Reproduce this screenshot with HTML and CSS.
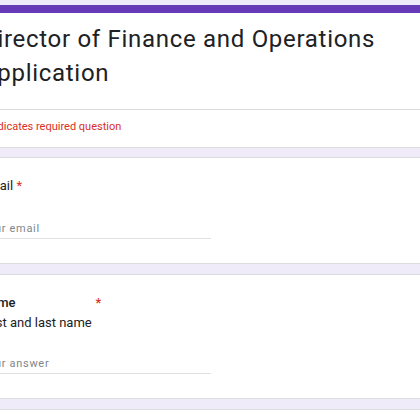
FILE: index.html
```html
<!DOCTYPE html>
<html lang="en">
<head>
  <meta charset="UTF-8">
  <meta name="viewport" content="width=device-width, initial-scale=1.0">
  <title>Director of Finance and Operations Application</title>
  <link rel="stylesheet" href="styles.css">
</head>
<body>
  <div class="form">
    <div class="card header-card">
      <h1 class="form-title">Director of Finance and Operations Application</h1>
      <div class="required-note">* Indicates required question</div>
    </div>

    <div class="card question">
      <div class="q-title">Email <span class="req">*</span></div>
      <div class="answer">Your email</div>
    </div>

    <div class="card question">
      <div class="q-title bold">Name<span class="req req-far">*</span></div>
      <div class="q-desc">First and last name</div>
      <div class="answer">Your answer</div>
    </div>

    <div class="card question"></div>
  </div>
</body>
</html>
```

FILE: styles.css
```css
body {
  margin: 0;
  background-color: #f0ebf8;
  font-family: Roboto, Arial, sans-serif;
  color: #202124;
  overflow: hidden;
}
.form {
  margin-left: -44px;
  width: 500px;
  padding-top: 5px;
}
.card {
  background-color: #fff;
  border: 1px solid #dadce0;
  border-radius: 8px;
  margin-bottom: 10px;
  padding: 0 24px;
}
.header-card {
  border-top: 8px solid #673ab7;
  padding-top: 9px;
  padding-bottom: 12px;
  margin-bottom: 9px;
}
.form-title {
  margin: 0 -24px;
  padding: 0 24px 19px;
  font-weight: 400;
  font-size: 24px;
  line-height: 34px;
  letter-spacing: 0.7px;
  border-bottom: 1px solid #dadce0;
}
.required-note {
  color: #d93025;
  font-size: 11px;
  line-height: 16px;
  padding-top: 9px;
}
.question {
  padding-top: 18px;
  padding-bottom: 24px;
}
.q-title {
  font-size: 13px;
  line-height: 20px;
}
.q-title.bold {
  font-weight: 500;
}
.req {
  color: #d93025;
}
.req-far {
  padding-left: 80px;
}
.q-desc {
  font-size: 13px;
  line-height: 20px;
}
.answer {
  width: 230px;
  margin-top: 25px;
  font-size: 11px;
  letter-spacing: 0.7px;
  line-height: 16px;
  color: #80868b;
  border-bottom: 1px solid #e0e0e0;
  padding-bottom: 1px;
}
.q-desc + .answer {
  margin-top: 23px;
}
```
